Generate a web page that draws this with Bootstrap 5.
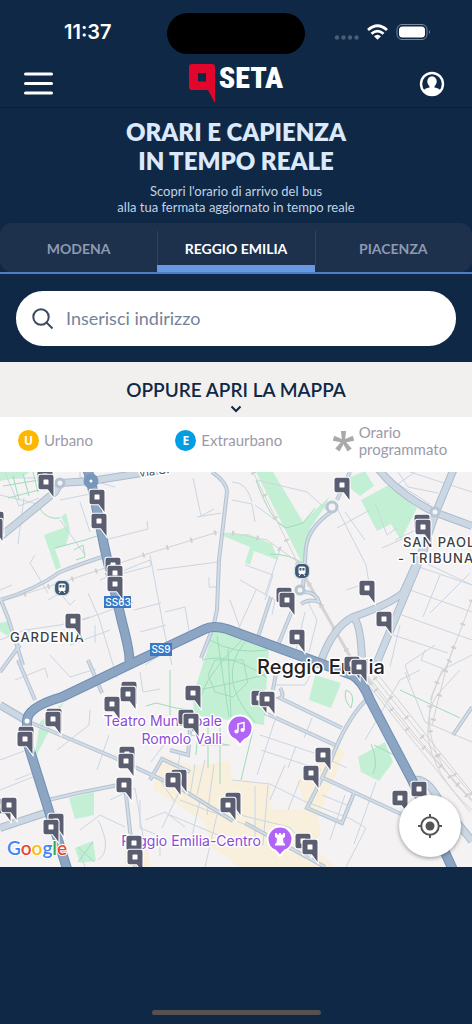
<!DOCTYPE html>
<html lang="it">
<head>
<meta charset="utf-8">
<meta name="viewport" content="width=device-width, initial-scale=1">
<title>SETA - Orari e capienza in tempo reale</title>
<link href="https://cdn.jsdelivr.net/npm/bootstrap@5.3.0/dist/css/bootstrap.min.css" rel="stylesheet">
<style>
  body { background: #0e2846; font-family: Lato, "Open Sans", sans-serif; }
  .status-bar { height: 64px; font: 600 20px/24px Inter, sans-serif; }
  .status-bar > * { flex: 1 1 0; }
  .island { flex: 0 0 138px; height: 41px; background: #000; margin-top: 2px; }
  .app-bar { height: 44px; border-bottom: 1px solid #0a2039; }
  .icon-btn { line-height: 0; color: #fff; }
  .wordmark { font: 900 30px/28px "Roboto Condensed", "Liberation Sans Narrow", "Liberation Sans", sans-serif; color: #fff; }
  .hero { padding-top: 9px; }
  .hero-title { font-size: 24px; line-height: 29px; font-weight: 800; color: #dce9fb; }
  .hero-text { font-size: 13px; line-height: 16px; color: #c3d2e5; }
  .city-tabs { background: #1d314d; border-radius: 12px; height: 49px; }
  .city-wrap { border-bottom: 2px solid #4f7fc4; }
  .city-tabs .nav-link { height: 49px; padding: 9px 0 0; border-radius: 0; border-bottom: 7px solid transparent; color: #8d9ab0; font-size: 14px; font-weight: 700; background: none; }
  .city-tabs .nav-link.active { color: #fff; background: none; border-bottom-color: #6699e2; }
  .city-tabs .nav-item + .nav-item { background: linear-gradient(#31445f, #31445f) 0 8px / 1px 34px no-repeat; }
  .search-area { padding: 17px 16px 16px; }
  .search-box { height: 55px; border-radius: 27px; background: #fff; }
  .search-box .form-control { font-size: 18px; color: #0e2846; box-shadow: none; }
  .search-box .form-control::placeholder { color: #73839b; opacity: 1; }
  .map-toggle { height: 55px; background: #f2f0ef; color: #0e2846; font-size: 19px; line-height: 24px; font-weight: 600; padding-top: 16px; }
  .legend-row { height: 55px; padding-bottom: 8px; color: #9c9aa8; font-size: 15px; line-height: 17px; }
  .legend-row > * { gap: 5px; padding-left: 18px; }
  .line-dot { width: 21px; height: 21px; color: #fff; font: 700 12px/21px "Open Sans", sans-serif; text-align: center; flex: none; }
  .city-map { height: 395px; background: #f4f2f3; }
  .locate { right: 11px; bottom: 10px; width: 62px; height: 62px; background: #fff; color: #555; box-shadow: 0 1px 4px #0006; line-height: 0; }
  .home-bar { width: 169px; height: 5px; background: #56514f; margin-bottom: 9px; }
  .min { fill: none; stroke: #cbd6e2; stroke-width: 1; }
  .mid-edge { fill: none; stroke: #b4c2d1; stroke-width: 4; }
  .mid { fill: none; stroke: #d2dce6; stroke-width: 2; }
  .sec-edge { fill: none; stroke: #abbccd; stroke-width: 8; }
  .sec { fill: none; stroke: #cbd7e3; stroke-width: 6; }
  .hwy-edge { fill: none; stroke: #6f8fb3; stroke-width: 10; }
  .hwy { fill: none; stroke: #8ba5c3; stroke-width: 8; }
  .rail { fill: none; stroke: #d4d4d5; stroke-width: 1; }
  .rail-wide { fill: none; stroke: #d4d4d5; stroke-width: 3; }
  .tie { fill: none; stroke: #d0d0d2; stroke-width: 5; stroke-dasharray: 2 23; }
  .green { fill: #c3f0d4; }
  .path-green { fill: none; stroke: #9fdcba; stroke-width: 1; }
  .halo { paint-order: stroke; stroke: #fff; stroke-width: 3; stroke-linejoin: round; font-family: Inter, sans-serif; }
  .area { font-size: 13px; letter-spacing: 1px; fill: #3c4043; font-weight: 500; }
  .poi { font-size: 14px; fill: #8b4bd8; font-weight: 400; }
</style>
</head>
<body>
<div class="d-flex flex-column min-vh-100">
  <div class="status-bar d-flex align-items-center text-white">
    <div class="ps-4"><span class="ps-3 ms-4">11:37</span></div>
    <div class="island rounded-pill"></div>
    <div class="d-flex justify-content-end align-items-center pe-4">
      <svg class="me-3" width="98" height="20" viewBox="334 22 98 20" aria-label="Wi-Fi e batteria">
        <g fill="#4a5d76"><circle cx="337" cy="37.500" r="2.200"/><circle cx="343.500" cy="37.500" r="2.200"/><circle cx="350" cy="37.500" r="2.200"/><circle cx="356.500" cy="37.500" r="2.200"/></g>
        <g fill="none" stroke="#fff" stroke-width="2.700"><path d="M368 30q9.500-8.500 19 0M371.500 33.800q6-5.400 12 0"/></g>
        <path d="M374 36.300q3.500-3 7 0l-3.500 3.500z" fill="#fff"/>
        <rect x="397" y="24.500" width="30" height="15" rx="5" fill="none" stroke="#7b8999"/><rect x="399" y="26.500" width="26" height="11" rx="3.500" fill="#fff"/><path d="M429 30q2 2 0 4z" fill="#7b8999"/>
      </svg>
    </div>
  </div>

  <header class="app-bar d-flex align-items-center justify-content-between px-4">
    <button class="icon-btn btn p-0 border-0 mt-1 pb-2" aria-label="Menu">
      <svg width="29" height="24" viewBox="0 0 29 24" stroke="#fff" stroke-width="3" stroke-linecap="round"><path d="M1.500 2h26M1.500 11.500h26M1.500 21h26"/></svg>
    </button>
    <a href="#" class="d-flex text-decoration-none pb-1" aria-label="SETA">
      <svg width="30" height="40" viewBox="0 0 30 40"><path fill="#e2062c" fill-rule="evenodd" d="M3 0h20q3 0 3 3v36l-7-13H3q-3 0-3-3V3q0-3 3-3zm7 9q-1 0-1 1v6.500q0 1 1 1h6q1 0 1-1V10q0-1-1-1z"/></svg>
      <span class="wordmark">SETA</span>
    </a>
    <button class="icon-btn btn p-0 border-0 pb-2 mt-1" aria-label="Profilo">
      <svg width="29" height="26" viewBox="0 0 29 26"><circle cx="13" cy="13" r="11" fill="none" stroke="#fff" stroke-width="2.400"/><ellipse cx="13" cy="10.500" rx="4.700" ry="5.200" fill="#fff"/><path d="M10.500 14h5v2.500q5 .7 6.300 3.500-4 4-8.800 4t-8.800-4q1.300-2.800 6.300-3.500z" fill="#fff"/></svg>
    </button>
  </header>

  <section class="hero text-center">
    <h1 class="hero-title mb-2 mt-0">ORARI E CAPIENZA<br>IN TEMPO REALE</h1>
    <p class="hero-text mb-2">Scopri l'orario di arrivo del bus<br>alla tua fermata aggiornato in tempo reale</p>
    <div class="city-wrap">
      <ul class="city-tabs nav nav-pills nav-justified flex-nowrap" role="tablist">
        <li class="nav-item"><button class="nav-link w-100" role="tab">MODENA</button></li>
        <li class="nav-item"><button class="nav-link w-100 active" role="tab" aria-selected="true">REGGIO EMILIA</button></li>
        <li class="nav-item"><button class="nav-link w-100" role="tab">PIACENZA</button></li>
      </ul>
    </div>
    <div class="search-area">
      <label class="search-box d-flex align-items-center px-3">
        <svg class="flex-shrink-0" width="22" height="22" viewBox="0 0 22 22" fill="none" stroke="#3c4a60" stroke-width="2" aria-hidden="true"><circle cx="9" cy="9" r="7.700"/><path d="m14.500 14.500 6 6"/></svg>
        <input class="form-control border-0 bg-transparent" type="text" placeholder="Inserisci indirizzo" aria-label="Inserisci indirizzo">
      </label>
    </div>
  </section>

  <button class="map-toggle border-0 d-flex flex-column align-items-center">
    OPPURE APRI LA MAPPA
    <svg width="12" height="12" viewBox="0 0 12 12" fill="none" stroke="#0e2846" stroke-width="2"><path d="m1.500 4.500 4.500 4.500 4.500-4.500"/></svg>
  </button>

  <div class="legend-row bg-white row g-0">
    <div class="col-4 d-flex align-items-center"><span class="line-dot rounded-circle" style="background:#ffb600">U</span>Urbano</div>
    <div class="col-4 d-flex align-items-center"><span class="line-dot rounded-circle" style="background:#009fe3">E</span>Extraurbano</div>
    <div class="col-4 d-flex align-items-center"><svg class="flex-shrink-0" width="21" height="22" viewBox="0 0 23 22" fill="#a9a9aa"><path id="arm" d="M8.700 0h5.600l-1.200 11.500h-3.200z"/><use href="#arm" transform="rotate(72 11.500 11.500)"/><use href="#arm" transform="rotate(144 11.500 11.500)"/><use href="#arm" transform="rotate(216 11.500 11.500)"/><use href="#arm" transform="rotate(288 11.500 11.500)"/></svg><span>Orario<br>programmato</span></div>
  </div>

  <main class="city-map position-relative overflow-hidden">
    <svg class="d-block w-100 h-100" viewBox="0 472 472 395" preserveAspectRatio="xMidYMid slice" role="img" aria-label="Mappa delle fermate di Reggio Emilia">
      <defs>
        <g id="pin"><path d="M-5.500-7.200h11q2 0 2 2V15L1.800 7.200h-7.300q-2 0-2-2V-5.200q0-2 2-2z" fill="#5b5d70" stroke="#fff" stroke-width="2.200" paint-order="stroke"/><rect x="-2.500" y="-2.500" width="5" height="5" rx=".6" fill="#fff"/></g>
        <g id="station"><rect x="-7.500" y="-7.500" width="15" height="15" rx="5.500" fill="#3f5b73" stroke="#d5e2ea" stroke-width="1.200"/><rect x="-3.500" y="-4.500" width="7" height="7.500" rx="1.500" fill="#fff"/><path d="M-2.500-3h2v2.500h-2zM.5-3h2v2.500h-2z" fill="#3f5b73"/><path d="m-3 5 1.500-2M3 5 1.500 3" stroke="#fff"/></g>
      </defs>
      <!-- parks and centre -->
      <g class="green">
        <path d="M0 472h30l-8 5-22 4zM44 535l22-8-5-10 5-4 4 17-4 15-11 4 6 18-5 3zM0 524l8 7-8 7zM0 623l9-2 4 18-13-8z"/>
        <path d="M256 472h17l30 50 26-25-3 8-15 22-8 38zM348 478l17-7 9 15-14 10-10-8zM361 500l28-15 28 23-16 32-10-16-14 7z"/>
        <path d="M220 534q10-3 13 0h15l24 10 6 16-24-9-4 14-5-2 5-16-29-12z"/>
        <path d="m212 630 57 17-5 78-70-10-1-20 14-44z"/>
        <path d="m315 675 26 8-10 25-22-8zM358 757l27-15 8 20-14 19-18-9zM69 798l25-6v23l-19 4zM40 722l24-20-30 58zM75 848l18-7 3 20-16 2z"/>
      </g>
      <g fill="#f8efdc">
        <path d="m163 756 30 10 36-5 3 20 15-1 23 5 1 24 45 1 5 22-8 15 22 20h-95l-28-20-8-25-51-33z"/>
        <path d="m334 744 11 8-17 42-13 30 5 12-18-4 3-30-9-20zM125 850l22-5 3 22h-25z"/>
      </g>
      <!-- small streets -->
      <g class="min">
        <path d="M80 472v5l35 10M60 500l30-6M5 472l14 34 20-8M12 478h30M0 495l42 10M24 498l-6 46M60 520l25 35M80 502l10 30M105 540l43-11-1-8M193 478l8 38 13-7M197 517l24-4M150 555l15 80 7 30M157 570l61-8M100 580l50-20 1 6-38 10M88 593l11 25 18 60M83 620l50-18M134 610l27-7M140 632l26-7M165 612l20-5 5 30M209 577v10h9M35 555l-5 8 18 30M48 600l12-7 10 12 5-5M0 590l12-5M0 640l25-10 35-5 30-8M70 645l40-15M95 625v18"/>
        <path d="m15 680 30-12 3 10M50 655l20 22 26-8M0 672l20-30 10-12M140 672l3 20 17-3M145 665l18-12M57 750l32-25 1-15M97 770l12-35M0 760l32-12M15 780l20-8M0 790l38-15M98 820q15 30 0 40M80 830l20-15 25 12M85 867l-5-15M145 820l20-8 20 15M140 800v28l20 8v20M110 800l25-12 10 60"/>
        <path d="M232 482q15 0 20 20M232 500l20 4 3 18M257 480l50 12 20 18M255 505l30 22M337 528l33-18M345 512l20 28M338 510l28 55 3 18M375 503l12 32 10-7M346 590l22-7M398 472l10 15 30 6M415 472l-17 12 32 20M395 540l25-12M382 548l23-10"/>
        <path d="m419 567 53 18M410 590l62 22M402 615l70 25M393 635l55 18M440 575l-17 42M419 560l53 25M430 613l40-40M400 625l-10 42M425 650l-4 10 25 10 8-25"/>
        <path d="m245 565 28 10-8 25M240 580l35 20-3 15M230 600l10 28M256 590l-18 40M280 550l-15 45M307 600l10 20-8 32M305 612l-10 42"/>
        <path d="M275 685h30l16-30M260 735l60 20M261 750l60 20M275 720l-18 55M312 718l-8 20M296 746l-8 22M330 760l17 8M322 795l25 10M300 780l-12 30M285 765l-15 35M232 780l38 4 34 17 47 18 15 9-20 39M255 786v60M268 785l-5 60M224 811l65 16 20 20M180 800l80 30M170 815l60 25M365 740l35-60 20-10M376 782l-22 62M345 795l-15 45M405 672l20 50 47 20M430 700l12-30 30-15M410 472l62 20M410 680l-5-15 30-20"/>
        <path d="M180 755l-5 28M195 764l-5 32M205 760l-8 35M214 765l-7 50M180 790l-18 38M200 800l-10 45M217 815l-12 52M160 780l15 22M151 762l15-20"/>
      </g>
      <g class="path-green">
        <path d="M3 486l42-7M8 498l31-8M13 476l6 24M23 474l6 22M33 472l5 20M40 509q7 11 20 9M55 548l30-8 15-5M74 550l9-5 2 12-9 3M170 670v45M146 706l10-3 20 5 16 2"/>
        <path d="M210 640q24 15 57 10M202 660q28-8 64 17M197 690q30-5 70-16M200 700q5-24 42-60M217 636l12 81M245 642q-30 36 10 80M215 660h28l5 22-15 15-18-5-7-17zM228 649l3 68M199 720l-3 35M208 723v45M220 728v56M200 745h30M192 735l35 10"/>
        <path d="M256 480q15 42 30 48l17-5M303 523l12-15M270 554q20 0 34 10M371 744q8 18 2 30M374 745l20 10M78 847l16 15M93 842l-15 20M346 690q10 3 5 18-8-8-5-18M400 690l60 28M253 730l-12 50"/>
      </g>
      <!-- railways -->
      <g class="rail">
        <path id="r1" d="M0 602 75 578 150 553 218 532M253 472l48 98 51 90 60 75 60 65"/>
        <path id="r2" d="M232 533l35 7 35 25M472 600l-25 65-15 60M450 660q-25 35-20 70 5 38 42 70"/>
        <path d="m355 660 60 75 60 70M359 658l60 75 60 70M363 656l60 75 60 75M350 662l60 75 60 75"/><path d="m460 670-23 25q-10 15-9 40 4 40 44 75"/>
      </g>
      <g class="tie"><use href="#r1"/><use href="#r2"/><path d="m359 658 60 75 60 70"/></g>
      <path class="rail-wide" d="m301 570 51 90 20 25"/>
      <!-- roads -->
      <g class="mid-edge">
        <path id="m1" d="M0 598 8 618 23 665M0 600q35-10 60-28 20-8 48-17M0 672l20-27M212 472q15 10 15 20L219 560l-2 50-4 18M212 630l-11 28M350 472l-13 28M331 512q-22 15-25 35l-3 40M304 592q12 0 15 10-10-4-18 2"/>
        <path id="m2" d="m27 721 88 37 65 30 53 33M245 823l80 44M48 800l30-7 45-9M125 785l6 55 4 27M265 713l70 32M280 688q5 8 0 10l62 30M366 700q-20 20-35 60l-24 48 35 15 12-30M321 777l80 37M150 780l12-21 28 13M102 693l-14-33M18 660l17 40M170 750l18 5 2-25M273 690l5-28M257 640l14-43M278 645l14-34M453 735l19-28"/>
      </g>
      <g class="mid"><use href="#m1"/><use href="#m2"/></g>
      <g class="sec-edge"><path id="s1" d="M0 537 55 492 60 483 91 481 167 469M376 466q20 27 58 46l38 14M455 466l-19 46-12 35-21 46q-15 12-50 24-20 10-32 44M425 547l-50 120M353 617q8 6 9 45M0 705l27 16M0 828l48-16M415 780q12-2 24 20l33 41"/></g>
      <g class="sec"><use href="#s1"/></g>
      <g class="hwy-edge"><path id="h1" d="M87 468 91 481 105 550 122 622q9 34 7 40M27 721q0-14 35-24l73-35 70-33q8-4 22 0l125 46q10 5 18 25l42 80 42 92M27 721v20l20 64 22 70"/></g>
      <g class="hwy"><use href="#h1"/></g>
      <circle cx="60" cy="483" r="4" fill="#f4f2f3" stroke="#b3c1d0" stroke-width="3"/>
      <circle cx="91" cy="481" r="7.500" fill="#7896b9"/><circle cx="91" cy="481" r="1.500" fill="#fff"/>
      <circle cx="27" cy="721" r="2.500" fill="#fff"/>
      <g fill="#f4f2f3" stroke="#b8c6d4" stroke-width="3"><circle cx="332" cy="507" r="5"/><circle cx="435" cy="512" r="4"/><circle cx="300" cy="590" r="4"/></g>
      <!-- labels -->
      <g class="halo">
        <text x="139" y="477" font-size="11" fill="#4c5057" transform="rotate(-7 139 477)">Via G.</text>
        <text class="area" x="10" y="642">GARDENIA</text>
        <text class="area" x="403" y="547">SAN PAOL</text>
        <text class="area" x="398" y="563">- TRIBUNA</text>
        <text x="257" y="674" font-size="20" font-weight="500" fill="#202124">Reggio Emilia</text>
        <text class="poi" x="222" y="726" text-anchor="end">Teatro Municipale</text>
        <text class="poi" x="222" y="744" text-anchor="end">Romolo Valli</text>
        <text class="poi" x="261" y="846" text-anchor="end">Reggio Emilia-Centro</text>
      </g>
      <g font-family="Inter, sans-serif" font-size="10" font-weight="500" fill="#fff" text-anchor="middle">
        <path d="M104 596h27v12h-27zM150 643h22v13h-22z" fill="#3878c7"/>
        <text x="118" y="606">SS63</text><text x="161" y="653">SS9</text>
      </g>
      <use href="#station" x="62" y="588"/><use href="#station" x="302" y="571"/>
      <g stroke="#fff" stroke-width="2" fill="#b164f5">
        <path d="M240 745q-2-3-5-5.500a12.500 12.500 0 1 1 10 0q-3 2.500-5 5.500z"/>
        <path d="M280 856q-2-3-5-5.500a12.500 12.500 0 1 1 10 0q-3 2.500-5 5.500z"/>
      </g>
      <g fill="#fff"><circle cx="236.500" cy="731.500" r="2.100"/><circle cx="242.500" cy="730" r="2.100"/><path d="M238 731v-7l6-1.500v7.500" fill="none" stroke="#fff" stroke-width="1.500"/><path d="M275 833h2v1.500h2V833h2v1.500h2V833h2v4l-2 1.500.7 5h1.300v2h-10v-2h1.300l.7-5-2-1.500z"/></g>
      <!-- stops -->
      <g>
        <use href="#pin" x="45" y="476"/><use href="#pin" x="46" y="482"/><use href="#pin" x="97" y="497"/><use href="#pin" x="99" y="521"/>
        <use href="#pin" x="-4" y="519"/><use href="#pin" x="-5" y="526"/><use href="#pin" x="113" y="565"/><use href="#pin" x="115" y="573"/><use href="#pin" x="115" y="584"/>
        <use href="#pin" x="73" y="621"/><use href="#pin" x="342" y="485"/><use href="#pin" x="422" y="522"/><use href="#pin" x="423" y="527"/>
        <use href="#pin" x="367" y="588"/><use href="#pin" x="384" y="619"/><use href="#pin" x="284" y="595"/><use href="#pin" x="287" y="600"/><use href="#pin" x="297" y="637"/>
        <use href="#pin" x="352" y="664"/><use href="#pin" x="359" y="667"/><use href="#pin" x="129" y="689"/><use href="#pin" x="128" y="694"/><use href="#pin" x="112" y="704"/>
        <use href="#pin" x="193" y="693"/><use href="#pin" x="54" y="716"/><use href="#pin" x="53" y="719"/><use href="#pin" x="26" y="734"/><use href="#pin" x="25" y="739"/>
        <use href="#pin" x="186" y="717"/><use href="#pin" x="191" y="721"/><use href="#pin" x="259" y="698"/><use href="#pin" x="267" y="699"/>
        <use href="#pin" x="127" y="754"/><use href="#pin" x="126" y="761"/><use href="#pin" x="124" y="785"/><use href="#pin" x="179" y="777"/><use href="#pin" x="173" y="780"/>
        <use href="#pin" x="323" y="755"/><use href="#pin" x="311" y="773"/><use href="#pin" x="233" y="800"/><use href="#pin" x="228" y="805"/>
        <use href="#pin" x="3" y="806"/><use href="#pin" x="9" y="805"/><use href="#pin" x="56" y="821"/><use href="#pin" x="51" y="827"/>
        <use href="#pin" x="134" y="843"/><use href="#pin" x="135" y="857"/><use href="#pin" x="303" y="841"/><use href="#pin" x="310" y="847"/>
        <use href="#pin" x="400" y="798"/><use href="#pin" x="419" y="789"/>
      </g>
      <text x="7" y="855" font-family="Lato, sans-serif" font-size="19" font-weight="600" stroke="#fff" stroke-width="2" paint-order="stroke"><tspan fill="#4285f4">G</tspan><tspan fill="#ea4335">o</tspan><tspan fill="#fbbc04">o</tspan><tspan fill="#4285f4">g</tspan><tspan fill="#34a853">l</tspan><tspan fill="#ea4335">e</tspan></text>
    </svg>
    <button class="locate btn rounded-circle p-0 border-0 position-absolute" aria-label="La mia posizione">
      <svg width="24" height="24" viewBox="0 0 24 24" fill="none" stroke="#555" stroke-width="2"><circle cx="12" cy="12" r="8.800"/><circle cx="12" cy="12" r="4.500" fill="#555" stroke="none"/><path d="M12 0v4M12 20v4M0 12h4M20 12h4"/></svg>
    </button>
  </main>
  <div class="home-bar rounded-pill mt-auto mx-auto"></div>
</div>
<script src="https://cdn.jsdelivr.net/npm/bootstrap@5.3.0/dist/js/bootstrap.bundle.min.js"></script>
</body>
</html>
